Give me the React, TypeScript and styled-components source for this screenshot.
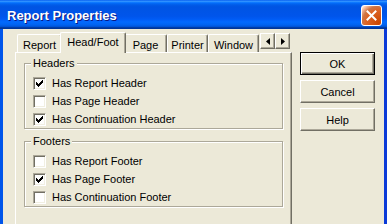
import React from "react";
import styled, { createGlobalStyle } from "styled-components";

const GlobalStyle = createGlobalStyle`
  html, body {
    margin: 0;
    padding: 0;
    height: 224px;
    overflow: hidden;
    background: #ece9d8;
  }
  #root {
    height: 224px;
    overflow: hidden;
  }
`;

const Window = styled.div`
  display: flex;
  flex-direction: column;
  width: 387px;
  height: 260px;
  font-family: "Liberation Sans", Arial, sans-serif;
  font-size: 11px;
  color: #000;
`;

const TitleBar = styled.div`
  display: flex;
  align-items: center;
  justify-content: space-between;
  height: 29px;
  padding: 0 5px 0 7px;
  box-sizing: border-box;
  background: linear-gradient(
    to bottom,
    #0058ee 0%,
    #3593ff 4%,
    #288eff 6%,
    #127dff 8%,
    #036ffc 10%,
    #0262ee 14%,
    #0057e5 20%,
    #0054e3 24%,
    #0055eb 56%,
    #005bf5 66%,
    #026afe 76%,
    #0062ef 86%,
    #0052d6 92%,
    #0040ab 94%,
    #003092 100%
  );
`;

const Title = styled.span`
  font-family: "Liberation Sans", Arial, sans-serif;
  font-weight: bold;
  font-size: 13px;
  color: #fff;
  text-shadow: 1px 1px 0 #0a1883;
  padding-top: 1px;
`;

const CloseButton = styled.div`
  display: flex;
  align-items: center;
  justify-content: center;
  width: 21px;
  height: 21px;
  box-sizing: border-box;
  border: 1px solid #fff;
  border-radius: 3px;
  margin-top: 1px;
  background: radial-gradient(
    circle at 90% 90%,
    #cc4600 0%,
    #dc6527 55%,
    #cd7546 70%,
    #ffccb2 90%,
    #fff 100%
  );
`;

const Body = styled.div`
  flex: 1;
  display: flex;
  align-items: flex-start;
  padding: 3px 9px 0 12px;
  border-left: 3px solid #0055ea;
  border-right: 3px solid #0a3ad8;
  background: #ece9d8;
`;

const TabControl = styled.div`
  display: flex;
  flex-direction: column;
  width: 277px;
  flex: 0 0 277px;
  height: 220px;
`;

const TabStrip = styled.div`
  display: flex;
  align-items: flex-end;
  height: 20px;
  padding-left: 2px;
`;

const Tab = styled.div<{ $w: number; $active?: boolean }>`
  position: relative;
  z-index: ${(p) => (p.$active ? 2 : 1)};
  box-sizing: border-box;
  width: ${(p) => p.$w + (p.$active ? 4 : 0)}px;
  height: ${(p) => (p.$active ? 21 : 18)}px;
  margin: ${(p) => (p.$active ? "0 -2px -1px -2px" : "0")};
  padding-top: ${(p) => (p.$active ? 3 : 4)}px;
  text-align: center;
  line-height: 13px;
  background: #ece9d8;
  border-left: 1px solid #fff;
  border-top: 1px solid #fff;
  border-right: 1px solid #716f64;
  border-top-left-radius: 2px;
  border-top-right-radius: 2px;
  box-shadow: inset -1px 0 0 #aca899;
`;

const Spinner = styled.div`
  display: flex;
  align-self: flex-start;
  margin: 1px 0 0 1px;
`;

const SpinButton = styled.div`
  display: flex;
  align-items: center;
  justify-content: center;
  width: 15px;
  height: 16px;
  box-sizing: border-box;
  background: #ece9d8;
  border: 1px solid;
  border-color: #fff #716f64 #716f64 #fff;
  box-shadow: inset -1px -1px 0 #aca899;
`;

const Panel = styled.div`
  flex: 1;
  box-sizing: border-box;
  padding: 4px 8px 0 8px;
  border-top: 1px solid #fff;
  border-left: 1px solid #fff;
  border-right: 1px solid #716f64;
  box-shadow: inset -1px 0 0 #aca899;
`;

const Group = styled.fieldset<{ $gap?: number }>`
  margin: ${(p) => p.$gap ?? 0}px 0 0 0;
  padding: 0;
  min-width: 0;
  border: 1px solid #aca899;
  box-shadow: inset 1px 1px 0 #fff, 1px 1px 0 #fff;
`;

const Legend = styled.legend`
  margin-left: 6px;
  padding: 0 2px;
  line-height: 13px;
  background: #ece9d8;
`;

const Rows = styled.div`
  display: flex;
  flex-direction: column;
  padding: 4px 0 0 8px;
`;

const Row = styled.label`
  display: flex;
  align-items: center;
  gap: 6px;
  height: 18px;
  line-height: 13px;
`;

const Box = styled.span<{ $checked?: boolean }>`
  display: flex;
  align-items: center;
  justify-content: center;
  width: 13px;
  height: 13px;
  box-sizing: border-box;
  border: 1px solid;
  border-color: #aca899 #fff #fff #aca899;
  box-shadow: inset 1px 1px 0 #716f64, inset -1px -1px 0 #f1efe2;
  background: ${(p) => (p.$checked ? "#fcfcfb" : "#fff")};
`;

const Buttons = styled.div`
  display: flex;
  flex-direction: column;
  gap: 5px;
  margin: 20px 0 0 8px;
`;

const Button = styled.div<{ $default?: boolean }>`
  display: flex;
  align-items: center;
  justify-content: center;
  width: 75px;
  height: 23px;
  box-sizing: border-box;
  background: #ece9d8;
  border: 1px solid;
  border-color: ${(p) =>
    p.$default ? "#000" : "#fff #716f64 #716f64 #fff"};
  box-shadow: ${(p) =>
    p.$default
      ? "inset 1px 1px 0 #fff, inset -1px -1px 0 #716f64, inset -2px -2px 0 #aca899"
      : "inset -1px -1px 0 #aca899"};
`;

function Check() {
  const cols = [2, 3, 4, 3, 2, 1, 0];
  return (
    <svg width="7" height="7" viewBox="0 0 7 7" shapeRendering="crispEdges">
      {cols.map((y, x) => (
        <rect key={x} x={x} y={y} width="1" height="3" fill="#000" />
      ))}
    </svg>
  );
}

function Option({ label, checked }: { label: string; checked?: boolean }) {
  return (
    <Row>
      <Box $checked={checked}>{checked && <Check />}</Box>
      <span>{label}</span>
    </Row>
  );
}

const tabs = [
  { name: "Report", w: 45 },
  { name: "Head/Foot", w: 62, active: true },
  { name: "Page", w: 43 },
  { name: "Printer", w: 41 },
  { name: "Window", w: 51 },
];

export default function App() {
  return (
    <>
      <GlobalStyle />
      <Window>
        <TitleBar>
          <Title>Report Properties</Title>
          <CloseButton>
            <svg width="11" height="11" viewBox="0 0 11 11">
              <path
                d="M1.5 1.5 L9.5 9.5 M9.5 1.5 L1.5 9.5"
                stroke="#fff"
                strokeWidth="2"
                strokeLinecap="square"
              />
            </svg>
          </CloseButton>
        </TitleBar>
        <Body>
          <TabControl>
            <TabStrip>
              {tabs.map((t) => (
                <Tab key={t.name} $w={t.w} $active={t.active}>
                  {t.name}
                </Tab>
              ))}
              <Spinner>
                <SpinButton>
                  <svg width="4" height="7" viewBox="0 0 4 7">
                    <path d="M4 0 L0 3.5 L4 7 Z" fill="#000" />
                  </svg>
                </SpinButton>
                <SpinButton>
                  <svg width="4" height="7" viewBox="0 0 4 7">
                    <path d="M0 0 L4 3.5 L0 7 Z" fill="#000" />
                  </svg>
                </SpinButton>
              </Spinner>
            </TabStrip>
            <Panel>
              <Group>
                <Legend>Headers</Legend>
                <Rows>
                  <Option label="Has Report Header" checked />
                  <Option label="Has Page Header" />
                  <Option label="Has Continuation Header" checked />
                </Rows>
              </Group>
              <Group $gap={6}>
                <Legend>Footers</Legend>
                <Rows>
                  <Option label="Has Report Footer" />
                  <Option label="Has Page Footer" checked />
                  <Option label="Has Continuation Footer" />
                </Rows>
              </Group>
            </Panel>
          </TabControl>
          <Buttons>
            <Button $default>OK</Button>
            <Button>Cancel</Button>
            <Button>Help</Button>
          </Buttons>
        </Body>
      </Window>
    </>
  );
}
